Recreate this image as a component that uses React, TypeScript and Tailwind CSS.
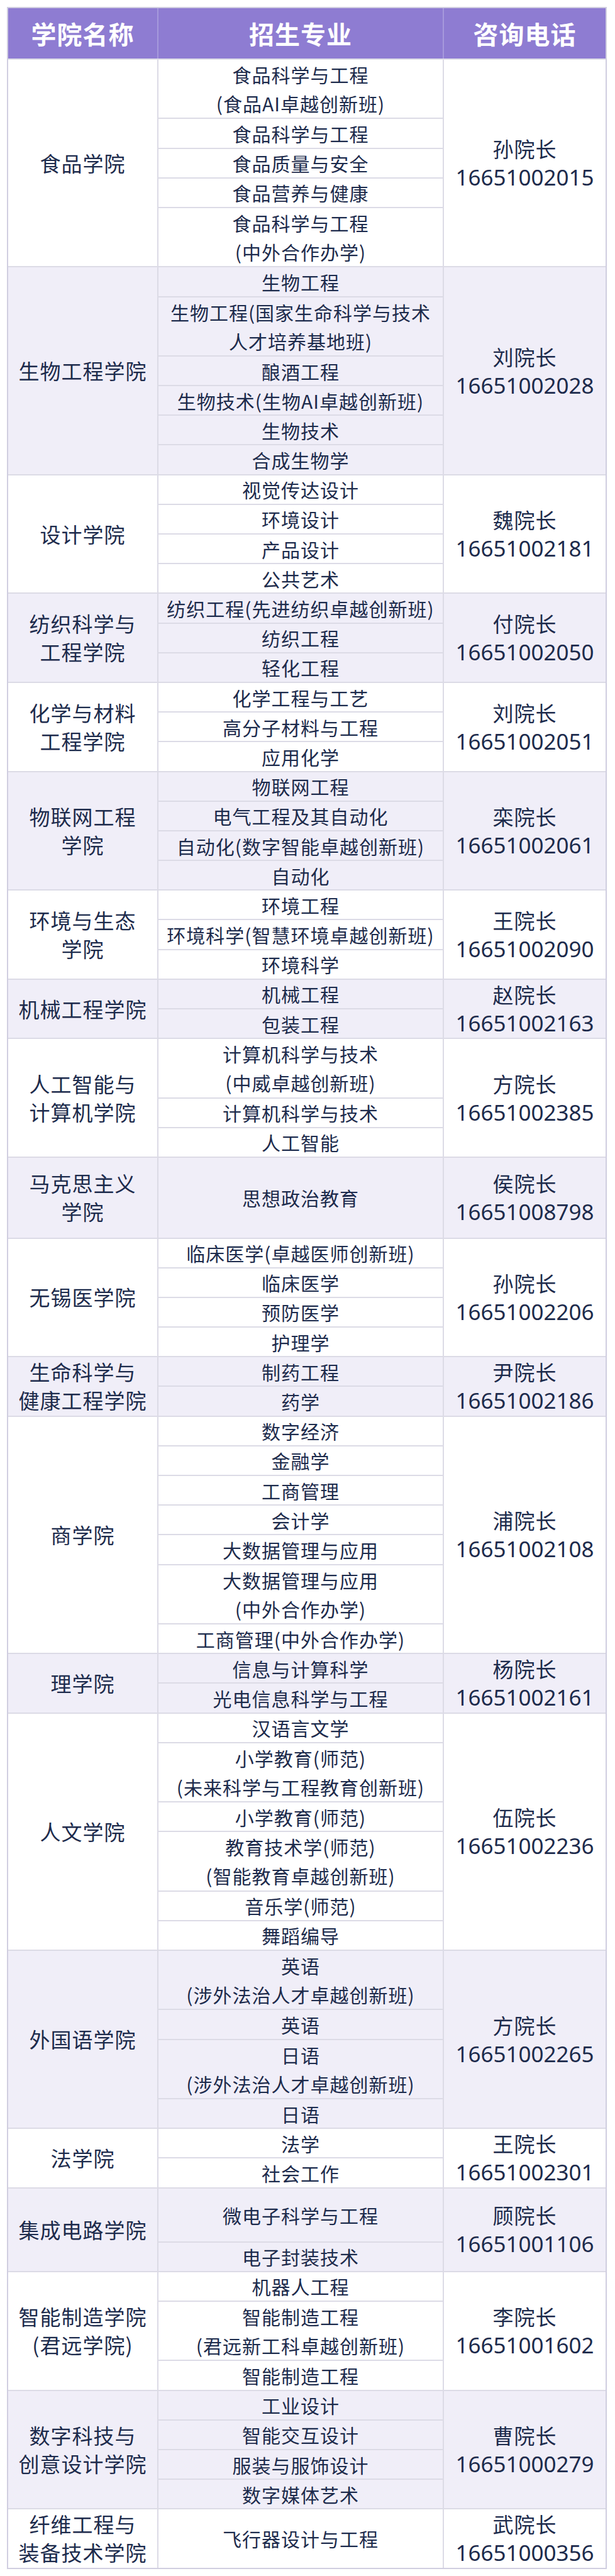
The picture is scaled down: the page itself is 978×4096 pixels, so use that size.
type Major = { lines: string[]; h?: string };

interface College {
  name: string[];
  dean: string;
  phone: string;
  majors: Major[];
}

const m = (...lines: string[]): Major => ({ lines });

const colleges: College[] = [
  {
    name: ['食品学院'],
    dean: '孙院长',
    phone: '16651002015',
    majors: [
      m('食品科学与工程', '(食品AI卓越创新班)'),
      m('食品科学与工程'),
      m('食品质量与安全'),
      m('食品营养与健康'),
      m('食品科学与工程', '(中外合作办学)'),
    ],
  },
  {
    name: ['生物工程学院'],
    dean: '刘院长',
    phone: '16651002028',
    majors: [
      m('生物工程'),
      m('生物工程(国家生命科学与技术', '人才培养基地班)'),
      m('酿酒工程'),
      m('生物技术(生物AI卓越创新班)'),
      m('生物技术'),
      m('合成生物学'),
    ],
  },
  {
    name: ['设计学院'],
    dean: '魏院长',
    phone: '16651002181',
    majors: [m('视觉传达设计'), m('环境设计'), m('产品设计'), m('公共艺术')],
  },
  {
    name: ['纺织科学与', '工程学院'],
    dean: '付院长',
    phone: '16651002050',
    majors: [m('纺织工程(先进纺织卓越创新班)'), m('纺织工程'), m('轻化工程')],
  },
  {
    name: ['化学与材料', '工程学院'],
    dean: '刘院长',
    phone: '16651002051',
    majors: [m('化学工程与工艺'), m('高分子材料与工程'), m('应用化学')],
  },
  {
    name: ['物联网工程', '学院'],
    dean: '栾院长',
    phone: '16651002061',
    majors: [m('物联网工程'), m('电气工程及其自动化'), m('自动化(数字智能卓越创新班)'), m('自动化')],
  },
  {
    name: ['环境与生态', '学院'],
    dean: '王院长',
    phone: '16651002090',
    majors: [m('环境工程'), m('环境科学(智慧环境卓越创新班)'), m('环境科学')],
  },
  {
    name: ['机械工程学院'],
    dean: '赵院长',
    phone: '16651002163',
    majors: [m('机械工程'), m('包装工程')],
  },
  {
    name: ['人工智能与', '计算机学院'],
    dean: '方院长',
    phone: '16651002385',
    majors: [m('计算机科学与技术', '(中威卓越创新班)'), m('计算机科学与技术'), m('人工智能')],
  },
  {
    name: ['马克思主义', '学院'],
    dean: '侯院长',
    phone: '16651008798',
    majors: [{ lines: ['思想政治教育'], h: 'h-[128.5px]' }],
  },
  {
    name: ['无锡医学院'],
    dean: '孙院长',
    phone: '16651002206',
    majors: [m('临床医学(卓越医师创新班)'), m('临床医学'), m('预防医学'), m('护理学')],
  },
  {
    name: ['生命科学与', '健康工程学院'],
    dean: '尹院长',
    phone: '16651002186',
    majors: [m('制药工程'), m('药学')],
  },
  {
    name: ['商学院'],
    dean: '浦院长',
    phone: '16651002108',
    majors: [
      m('数字经济'),
      m('金融学'),
      m('工商管理'),
      m('会计学'),
      m('大数据管理与应用'),
      m('大数据管理与应用', '(中外合作办学)'),
      m('工商管理(中外合作办学)'),
    ],
  },
  {
    name: ['理学院'],
    dean: '杨院长',
    phone: '16651002161',
    majors: [m('信息与计算科学'), m('光电信息科学与工程')],
  },
  {
    name: ['人文学院'],
    dean: '伍院长',
    phone: '16651002236',
    majors: [
      m('汉语言文学'),
      m('小学教育(师范)', '(未来科学与工程教育创新班)'),
      m('小学教育(师范)'),
      m('教育技术学(师范)', '(智能教育卓越创新班)'),
      m('音乐学(师范)'),
      m('舞蹈编导'),
    ],
  },
  {
    name: ['外国语学院'],
    dean: '方院长',
    phone: '16651002265',
    majors: [
      m('英语', '(涉外法治人才卓越创新班)'),
      m('英语'),
      m('日语', '(涉外法治人才卓越创新班)'),
      m('日语'),
    ],
  },
  {
    name: ['法学院'],
    dean: '王院长',
    phone: '16651002301',
    majors: [m('法学'), m('社会工作')],
  },
  {
    name: ['集成电路学院'],
    dean: '顾院长',
    phone: '16651001106',
    majors: [{ lines: ['微电子科学与工程'], h: 'h-[86px]' }, m('电子封装技术')],
  },
  {
    name: ['智能制造学院', '(君远学院)'],
    dean: '李院长',
    phone: '16651001602',
    majors: [m('机器人工程'), m('智能制造工程', '(君远新工科卓越创新班)'), m('智能制造工程')],
  },
  {
    name: ['数字科技与', '创意设计学院'],
    dean: '曹院长',
    phone: '16651000279',
    majors: [m('工业设计'), m('智能交互设计'), m('服装与服饰设计'), m('数字媒体艺术')],
  },
  {
    name: ['纤维工程与', '装备技术学院'],
    dean: '武院长',
    phone: '16651000356',
    majors: [{ lines: ['飞行器设计与工程'], h: 'h-[94.4px]' }],
  },
];

const rowHeight = (major: Major) =>
  major.h ?? (major.lines.length === 2 ? 'h-[94.4px]' : 'h-[47.2px]');

export default function App() {
  return (
    <div className="w-full bg-white pt-[11px] pb-[11px] font-['Noto_Sans_CJK_SC',sans-serif] text-[#1d2b4c]">
      <div className="ml-[11px] w-[954px] border-2 border-[#d0cee0]">
        {/* Header */}
        <div className="flex h-[80px] bg-[#8e7cd2] text-white font-bold text-[40px] tracking-[1px]">
          <div className="w-[239px] flex items-center justify-center border-r-2 border-[#a699dc]">学院名称</div>
          <div className="w-[454px] flex items-center justify-center border-r-2 border-[#a699dc]">招生专业</div>
          <div className="flex-1 flex items-center justify-center">咨询电话</div>
        </div>

        {/* Body: every cell carries its own top rule so the rows keep their heights */}
        {colleges.map((c, i) => (
          <div key={i} className={`flex ${i % 2 === 1 ? 'bg-[#f0eef8]' : 'bg-white'}`}>
            <div className="w-[239px] flex flex-col items-center justify-center border-t-2 border-r-2 border-[#dcdbe6] text-[33px] leading-[45px] tracking-[1px]">
              {c.name.map((line, j) => (
                <span key={j}>{line}</span>
              ))}
            </div>

            <div className="w-[454px] flex flex-col border-r-2 border-[#dcdbe6]">
              {c.majors.map((major, j) => (
                <div
                  key={j}
                  className={`${rowHeight(major)} flex flex-col items-center justify-center border-t-2 border-[#dcdbe6] text-[30px] leading-[46px] tracking-[1px]`}
                >
                  {major.lines.map((line, k) => (
                    <span key={k} className="whitespace-nowrap">{line}</span>
                  ))}
                </div>
              ))}
            </div>

            <div className="flex-1 flex flex-col items-center justify-center border-t-2 border-[#dcdbe6] leading-[45px]">
              <span className="text-[33px] tracking-[1px]">{c.dean}</span>
              <span className="text-[35px] font-['Noto_Sans','Noto_Sans_CJK_SC',sans-serif]">{c.phone}</span>
            </div>
          </div>
        ))}
      </div>
    </div>
  );
}
